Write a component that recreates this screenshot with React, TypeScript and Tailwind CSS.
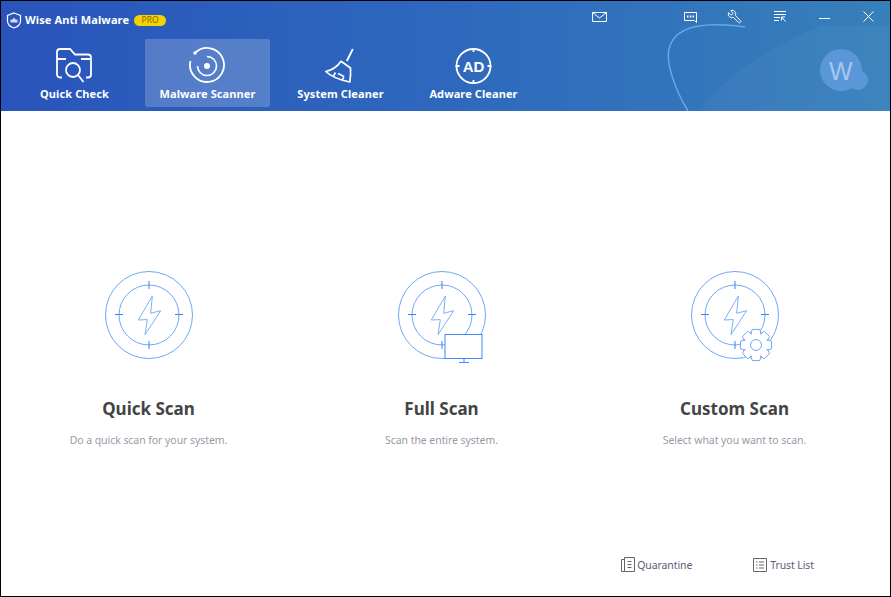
import { Wrench } from "lucide-react";

const font = { fontFamily: '"Noto Sans", "DejaVu Sans", sans-serif' };

function Reticle() {
  return (
    <>
      <circle cx="48" cy="48" r="43.5" fill="none" stroke="#6ea6f7" strokeWidth="1" />
      <circle cx="48" cy="48" r="30" fill="none" stroke="#6ea6f7" strokeWidth="1" />
      <path d="M48 14v8M48 74v8M14 47.5h8M74 47.5h8" stroke="#2f86f7" strokeWidth="1" fill="none" />
      <path d="M51.3 29 37.3 53l9-.4L44 67.7 59.7 43.7l-10 2.6z" fill="none" stroke="#7cb0f7" strokeWidth="1" strokeLinejoin="miter" />
    </>
  );
}

function QuickIcon() {
  return (
    <svg width="96" height="100" viewBox="0 0 96 100" className="block">
      <Reticle />
    </svg>
  );
}

function FullIcon() {
  return (
    <svg width="96" height="100" viewBox="0 0 96 100" className="block">
      <Reticle />
      <rect x="51" y="67.5" width="37" height="24" fill="#fff" stroke="#3d8bf5" strokeWidth="1" />
      <path d="M70 92v3M65 95.5h10" stroke="#3d8bf5" strokeWidth="1" fill="none" />
    </svg>
  );
}

function CustomIcon() {
  const cx = 69;
  const cy = 78;
  const teeth = 8;
  const pts: string[] = [];
  for (let i = 0; i < teeth; i++) {
    const a = (i * 2 * Math.PI) / teeth;
    const w = Math.PI / 8;
    const steps: [number, number][] = [
      [a - w * 1.15, 12.2],
      [a - w * 0.6, 16],
      [a + w * 0.6, 16],
      [a + w * 1.15, 12.2],
    ];
    steps.forEach(([t, r]) => pts.push(`${(cx + r * Math.cos(t)).toFixed(1)},${(cy + r * Math.sin(t)).toFixed(1)}`));
  }
  return (
    <svg width="96" height="100" viewBox="0 0 96 100" className="block">
      <Reticle />
      <polygon points={pts.join(" ")} fill="#fff" stroke="#6ea6f7" strokeWidth="1" strokeLinejoin="round" />
      <circle cx={cx} cy={cy} r="5.5" fill="none" stroke="#6ea6f7" strokeWidth="1" />
    </svg>
  );
}

function ScanCard({ title, desc, icon }: { title: string; desc: string; icon: React.ReactNode }) {
  return (
    <div className="flex flex-col items-center">
      {icon}
      <div className="mt-[30px] text-[17px] leading-[24px] font-bold text-[#444444]">{title}</div>
      <div className="mt-[11px] text-[10.5px] leading-[16px] tracking-[-0.06px] text-[#9a9aa6]">{desc}</div>
    </div>
  );
}

function NavTab({ label, active, children }: { label: string; active?: boolean; children: React.ReactNode }) {
  return (
    <div className={`w-[125px] h-[68px] flex flex-col items-center rounded-[2px] ${active ? "bg-white/20" : ""}`}>
      <svg width="40" height="40" viewBox="0 0 40 40" className="block mt-[7px]" fill="none" stroke="#fff" strokeWidth="2">
        {children}
      </svg>
      <div className="text-[11px] leading-[14px] font-bold tracking-[0.1px] text-white mt-[1px]">{label}</div>
    </div>
  );
}

export default function App() {
  return (
    <div className="w-[891px] h-[597px] flex flex-col bg-white border border-black overflow-hidden" style={font}>
      {/* cabecalho */}
      <div className="relative h-[110px] shrink-0 bg-gradient-to-r from-[#2a54bb] via-[#2e68bd] to-[#3780ba] overflow-hidden">
        <svg width="889" height="110" viewBox="0 0 889 110" className="absolute left-0 top-0" fill="none">
          <path d="M700 110C720 75 780 40 820 25L889 25V110z" fill="#ffffff" fillOpacity="0.035" />
          <path d="M687 110C672 85 665 60 668 48 672 30 690 22 724 24c8 .4 14 1 20 2" stroke="#6aa6e6" strokeWidth="1.5" />
          <circle cx="840" cy="69" r="21" fill="#5a97d9" />
          <circle cx="857" cy="79" r="10" fill="#5a97d9" />
        </svg>
        <div className="absolute left-[828px] top-[56px] text-[25px] leading-[28px] text-[#a6c8ee]" style={{ fontFamily: '"Liberation Sans", sans-serif' }}>W</div>

        <div className="relative h-[38px] flex items-center">
          <svg width="16" height="17" viewBox="0 0 16 17" className="ml-[5px]" fill="none" stroke="#fff">
            <path d="M8 1 14.5 3.5V9C14.5 12.5 11 15 8 16 5 15 1.5 12.5 1.5 9V3.5z" strokeWidth="1.2" />
            <path d="M8 5.5 10 8 11.5 7.2V10.5H4.5V7.2L6 8z" fill="#fff" fillOpacity="0.8" stroke="none" />
          </svg>
          <div className="ml-[3px] text-[11px] leading-[14px] font-bold tracking-[0.12px] text-white">Wise Anti Malware</div>
          <div className="ml-[5px] w-[32px] h-[11px] rounded-full bg-[#f2d200] flex items-center justify-center text-[8.5px] leading-none text-[#8a6a00]">PRO</div>

          <svg width="15" height="10" viewBox="0 0 15 10" className="absolute left-[591px] top-[11px]" fill="none" stroke="#fff">
            <path d="M.5.5h14v9H.5zM.5.5 7.5 6 14.5.5" />
          </svg>
          <svg width="13" height="11" viewBox="0 0 13 11" className="absolute left-[683px] top-[11px]" fill="none" stroke="#fff">
            <path d="M.5.5h12v10l-2-2H.5z" />
            <path d="M3 4.5h1.5M5.8 4.5h1.5M8.6 4.5h1.5" strokeWidth="2" />
          </svg>
          <Wrench size={15} color="#fff" strokeWidth={1.5} className="absolute left-[726px] top-[8px] -scale-x-100" />
          <svg width="12" height="11" viewBox="0 0 12 11" className="absolute left-[773px] top-[10px]" fill="none" stroke="#fff">
            <path d="M0 .5h12M0 3.5h12M0 6.5h6M0 9.5h5" />
            <path d="M7.5 6 11.5 10.5M7.5 6v3.5M7.5 6h3.5" />
          </svg>
          <div className="absolute left-[818px] top-[17px] w-[11px] h-px bg-white" />
          <svg width="11" height="11" viewBox="0 0 11 11" className="absolute left-[862px] top-[10px]" fill="none" stroke="#fff">
            <path d="M.5.5l10 10M10.5.5l-10 10" />
          </svg>
        </div>

        <div className="relative flex gap-[8px] pl-[11px]">
          <NavTab label="Quick Check">
            <path d="M7 31.5H5a3 3 0 0 1-3-3V6a3 3 0 0 1 3-3h10l5 5.5h13a3 3 0 0 1 3 3V28.5a3 3 0 0 1-3 3h-2" strokeWidth="1.8" />
            <path d="M3 13h8M26 13h9" strokeWidth="1.8" />
            <circle cx="18" cy="24" r="7" strokeWidth="1.8" />
            <path d="M23 29 28.5 36" strokeWidth="1.8" />
          </NavTab>
          <NavTab label="Malware Scanner" active>
            <path d="M7.5 6.5A17 17 0 1 1 2.5 15" strokeWidth="1.8" />
            <circle cx="7" cy="7" r="1.7" fill="#fff" stroke="none" />
            <path d="M19 10.5a9.5 9.5 0 1 1-9.5 9.5" strokeWidth="1.6" />
            <circle cx="19" cy="20" r="3" fill="#fff" stroke="none" />
          </NavTab>
          <NavTab label="System Cleaner">
            <path d="M31.8 3 25.8 15" strokeWidth="1.8" />
            <path d="M20 15.3 29.5 22C29.8 27 29.5 32 28.8 36 19 34 10 30.5 4.8 25.5 11.5 24 16.5 20.5 20 15.3z" strokeWidth="1.7" strokeLinejoin="round" />
            <path d="M17 27.5 23 30.5M21 34.5 23 30.5M12.5 30 14.5 26.5" strokeWidth="1.6" />
          </NavTab>
          <NavTab label="Adware Cleaner">
            <circle cx="19.5" cy="20" r="17" strokeWidth="1.8" />
            <path d="M19.5 2v4M19.5 34v4M1.5 20h4M33.5 20h4" strokeWidth="1.8" />
            <text x="19.5" y="25.5" textAnchor="middle" fill="#fff" stroke="none" fontSize="15" fontWeight="700" style={{ fontFamily: '"Liberation Sans", sans-serif' }}>AD</text>
          </NavTab>
        </div>
      </div>

      {/* tipos de analise */}
      <div className="flex-1 flex flex-col">
        <div className="grid grid-cols-[293px_293px_293px] pl-[1px] pt-[156px]">
          <ScanCard title="Quick Scan" desc="Do a quick scan for your system." icon={<QuickIcon />} />
          <ScanCard title="Full Scan" desc="Scan the entire system." icon={<FullIcon />} />
          <ScanCard title="Custom Scan" desc="Select what you want to scan." icon={<CustomIcon />} />
        </div>

        <div className="mt-auto mb-[24px] flex justify-end pr-[76px] gap-[61px] text-[10.5px] leading-[14px] tracking-[-0.1px] text-[#5a6078]">
          <div className="flex items-center gap-[2px]">
            <svg width="14" height="15" viewBox="0 0 14 15" fill="none" stroke="#666">
              <path d="M3.5.5h10v14h-10zM3.5 2.5H.5v12h3M6.5 4.5h4M6.5 7.5h4M6.5 10.5h4" />
            </svg>
            Quarantine
          </div>
          <div className="flex items-center gap-[3px]">
            <svg width="14" height="14" viewBox="0 0 14 14" fill="none" stroke="#666">
              <path d="M.5.5h13v13H.5zM3 4h1.5M6 4h5M3 7h1.5M6 7h5M3 10h1.5M6 10h5" />
            </svg>
            Trust List
          </div>
        </div>
      </div>
    </div>
  );
}
